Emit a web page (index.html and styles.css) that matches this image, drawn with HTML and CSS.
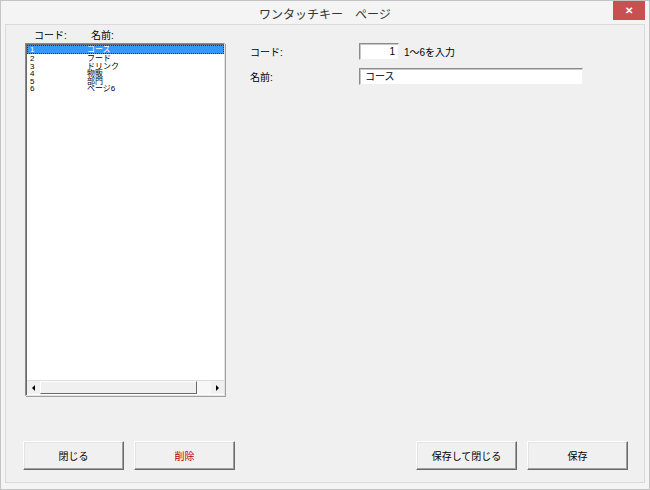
FILE: index.html
```html
<!DOCTYPE html>
<html lang="ja">
<head>
    <meta charset="UTF-8">
    <title>ワンタッチキー　ページ</title>
    <link rel="stylesheet" href="styles.css">
</head>
<body>
    <div class="window">
        <div class="titlebar">
            <span class="title">ワンタッチキー　ページ</span>
            <button class="close">&#x2715;</button>
        </div>
        <div class="client">
            <div class="main">
                <div class="left">
                    <div class="list-head">
                        <span class="col-code">コード:</span>
                        <span class="col-name">名前:</span>
                    </div>
                    <div class="list">
                        <div class="rows">
                            <div class="row selected"><span class="col-code">1</span><span class="col-name">コース</span></div>
                            <div class="row"><span class="col-code">2</span><span class="col-name">フード</span></div>
                            <div class="row"><span class="col-code">3</span><span class="col-name">ドリンク</span></div>
                            <div class="row"><span class="col-code">4</span><span class="col-name">物販</span></div>
                            <div class="row"><span class="col-code">5</span><span class="col-name">部門</span></div>
                            <div class="row"><span class="col-code">6</span><span class="col-name">ページ6</span></div>
                        </div>
                        <div class="hscroll">
                            <div class="arrow"><span class="tri-left"></span></div>
                            <div class="thumb"></div>
                            <div class="track"></div>
                            <div class="arrow"><span class="tri-right"></span></div>
                        </div>
                    </div>
                </div>
                <div class="form">
                    <div class="field">
                        <label>コード:</label>
                        <div class="input short">1</div>
                        <span class="hint">1～6を入力</span>
                    </div>
                    <div class="field">
                        <label>名前:</label>
                        <div class="input long">コース</div>
                    </div>
                </div>
            </div>
            <div class="buttons">
                <div class="group">
                    <button class="btn">閉じる</button>
                    <button class="btn danger">削除</button>
                </div>
                <div class="group">
                    <button class="btn">保存して閉じる</button>
                    <button class="btn">保存</button>
                </div>
            </div>
        </div>
    </div>
</body>
</html>
```

FILE: styles.css
```css
body {
    margin: 0;
    font-family: "Liberation Sans", "Noto Sans CJK JP", sans-serif;
    font-size: 11px;
    color: #000;
    background: #f0f0f0;
}
.window {
    width: 650px;
    height: 490px;
    box-sizing: border-box;
    border: 1px solid #c4c4c4;
    background: #f4f4f4;
    display: flex;
    flex-direction: column;
}
.titlebar {
    height: 23px;
    display: flex;
    align-items: center;
    justify-content: center;
    position: relative;
}
.title {
    font-size: 12px;
    color: #333;
    margin-top: 1px;
}
.close {
    position: absolute;
    right: 4px;
    top: 0;
    width: 32px;
    height: 19px;
    border: none;
    background: #c75050;
    color: #fff;
    font-size: 10px;
    font-weight: bold;
    padding: 0;
}
.client {
    flex: 1;
    margin: 0 4px 6px 4px;
    border: 1px solid #dadada;
    background: #f0f0f0;
    display: flex;
    flex-direction: column;
}
.main {
    display: flex;
    flex: 1;
}
.left {
    padding: 4px 0 0 19px;
    width: 200px;
}
.list-head {
    height: 13px;
    display: flex;
    font-size: 10px;
    line-height: 13px;
}
.list-head .col-code {
    margin-left: 6px;
}
.list {
    margin-top: 1px;
    height: 353px;
    box-sizing: border-box;
    background: #fff;
    border: 1px solid;
    border-color: #8c8c8c #e3e3e3 #e3e3e3 #8c8c8c;
    box-shadow: inset 1px 1px 0 #696969, 1px 1px 0 #a0a0a0;
    display: flex;
    flex-direction: column;
}
.rows {
    flex: 1;
    padding: 1px 0 0 1px;
    font-size: 8px;
}
.row {
    display: flex;
    height: 7.6px;
    line-height: 7.6px;
}
.row.selected {
    height: 9px;
    line-height: 9px;
    margin-bottom: 1px;
    background: #3399ff;
    color: #fff;
    outline: 1px dotted #333;
    outline-offset: -1px;
}
.col-code {
    width: 57px;
    padding-left: 3px;
}
.hscroll {
    height: 13px;
    display: flex;
    margin: 0 0 1px 1px;
    border-top: 1px solid #dcdcdc;
}
.arrow {
    width: 13px;
    display: flex;
    align-items: center;
    justify-content: center;
    background: #f0f0f0;
}
.tri-left {
    border-top: 3px solid transparent;
    border-bottom: 3px solid transparent;
    border-right: 3px solid #000;
}
.tri-right {
    border-top: 3px solid transparent;
    border-bottom: 3px solid transparent;
    border-left: 3px solid #000;
}
.thumb {
    width: 157px;
    background: #f0f0f0;
    border: 1px solid;
    border-color: #fff #696969 #696969 #fff;
    box-sizing: border-box;
}
.track {
    flex: 1;
    background: #f7f7f7;
}
.form {
    margin-left: 25px;
    padding-top: 18px;
}
.field {
    display: flex;
    align-items: center;
    height: 17px;
    margin-bottom: 8px;
}
.field label {
    width: 109px;
    font-size: 10px;
}
.input {
    height: 17px;
    box-sizing: border-box;
    background: #fff;
    border: 1px solid;
    border-color: #8c8c8c #f0f0f0 #f0f0f0 #8c8c8c;
    box-shadow: inset 1px 1px 0 #c8c8c8;
    font-size: 10px;
    line-height: 15px;
}
.input.short {
    width: 40px;
    text-align: right;
    padding-right: 3px;
}
.input.long {
    width: 224px;
    padding-left: 5px;
}
.hint {
    margin-left: 5px;
    font-size: 10px;
}
.buttons {
    display: flex;
    justify-content: space-between;
    padding: 0 16px 12px 17px;
}
.group {
    display: flex;
    gap: 10px;
}
.btn {
    width: 101px;
    height: 29px;
    font-family: "Liberation Sans", "Noto Sans CJK JP", sans-serif;
    font-size: 10px;
    background: #f0f0f0;
    border: 1px solid;
    border-color: #fff #696969 #696969 #fff;
    box-shadow: inset -1px -1px 0 #a0a0a0, inset 1px 1px 0 #e3e3e3;
    padding: 0;
    color: #000;
}
.btn.danger {
    color: #c00000;
}
```
